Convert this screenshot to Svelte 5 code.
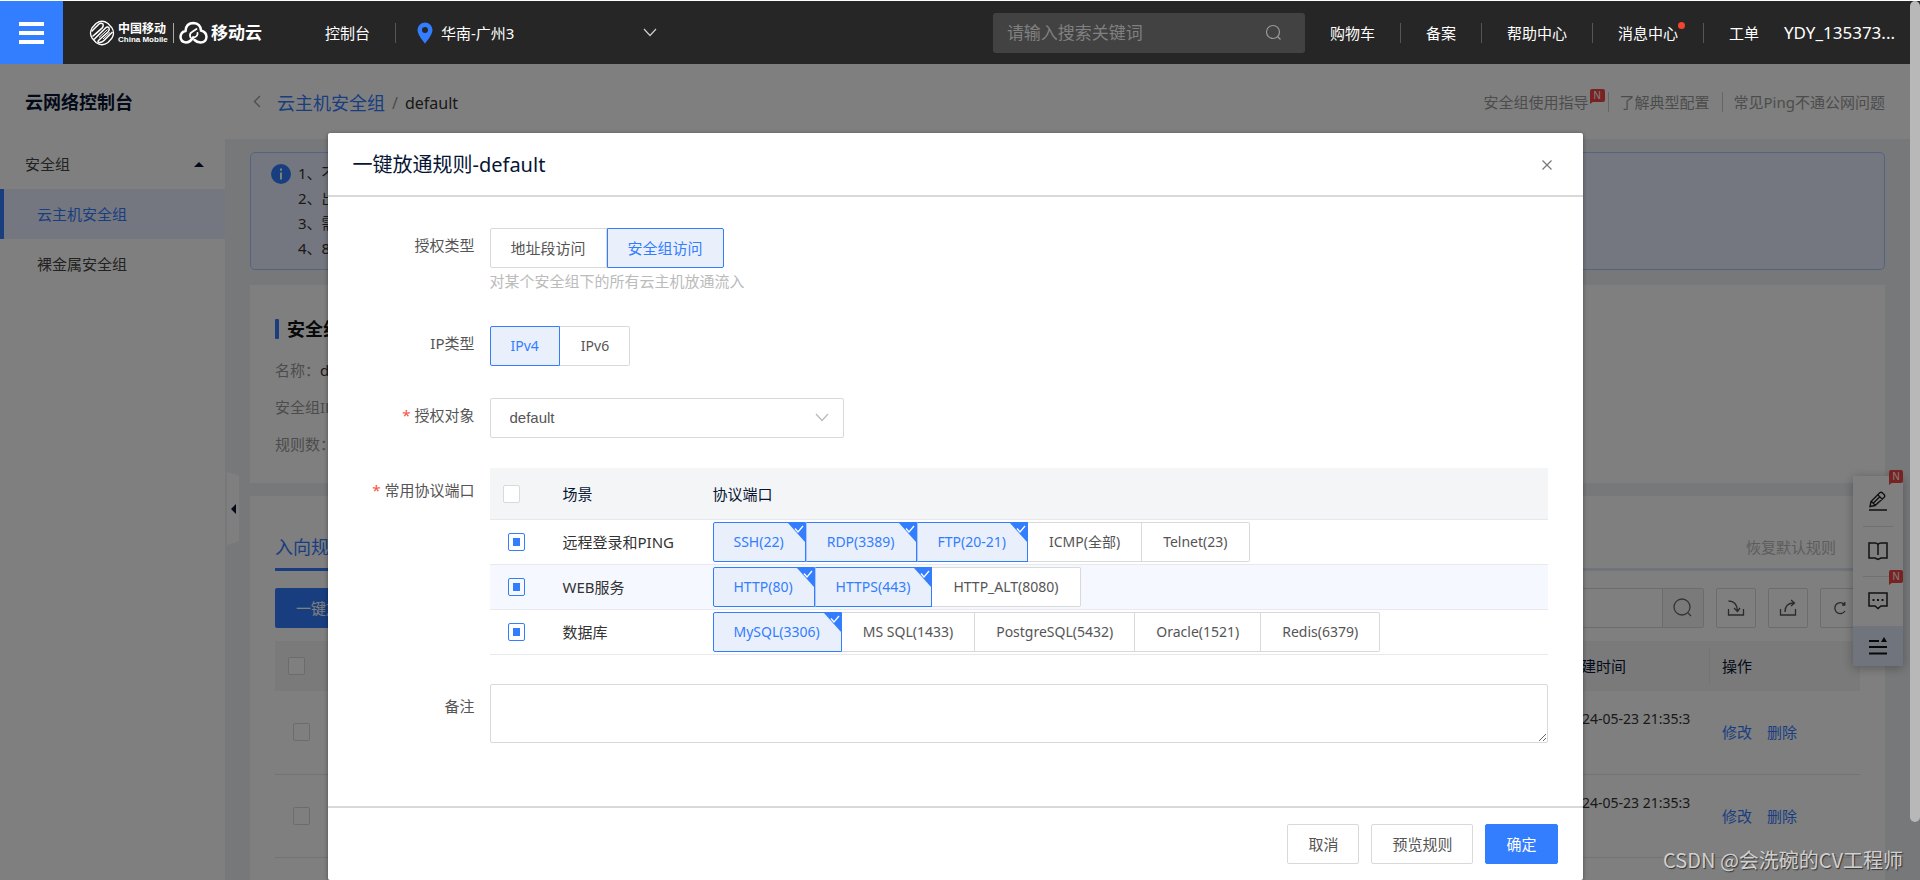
<script lang="ts">
    type Port = { name: string; checked: boolean };
    type Scene = { name: string; ports: Port[] };

    const navItems = ["购物车", "备案", "帮助中心", "消息中心", "工单"];
    const notices = ["1、不", "2、出", "3、需", "4、8"];
    const rules = ["2024-05-23 21:35:3", "2024-05-23 21:35:3"];

    let keyword = $state("");
    let authType = $state("group");
    let ipType = $state("IPv4");
    let target = $state("default");
    let remark = $state("");
    let open = $state(true);

    let scenes: Scene[] = $state([
        {
            name: "远程登录和PING",
            ports: [
                { name: "SSH(22)", checked: true },
                { name: "RDP(3389)", checked: true },
                { name: "FTP(20-21)", checked: true },
                { name: "ICMP(全部)", checked: false },
                { name: "Telnet(23)", checked: false },
            ],
        },
        {
            name: "WEB服务",
            ports: [
                { name: "HTTP(80)", checked: true },
                { name: "HTTPS(443)", checked: true },
                { name: "HTTP_ALT(8080)", checked: false },
            ],
        },
        {
            name: "数据库",
            ports: [
                { name: "MySQL(3306)", checked: true },
                { name: "MS SQL(1433)", checked: false },
                { name: "PostgreSQL(5432)", checked: false },
                { name: "Oracle(1521)", checked: false },
                { name: "Redis(6379)", checked: false },
            ],
        },
    ]);

    function allChecked(scene: Scene) {
        return scene.ports.every((p) => p.checked);
    }

    function partial(scene: Scene) {
        return !allChecked(scene) && scene.ports.some((p) => p.checked);
    }

    function toggle(scene: Scene) {
        const value = !allChecked(scene);
        scene.ports.forEach((p) => (p.checked = value));
    }

    function toggleAll() {
        const value = !scenes.every(allChecked);
        scenes.forEach((s) => s.ports.forEach((p) => (p.checked = value)));
    }
</script>

{#snippet badge()}
    <span class="badge">N</span>
{/snippet}

<div class="app">
    <header class="topbar">
        <button class="menu" aria-label="菜单"><i></i><i></i><i></i></button>
        <a class="logo" href="#home">
            <svg width="26" height="26" viewBox="0 0 26 26" fill="none" stroke="#fff">
                <path d="M7 3.500Q13-1 19 3.500L23 8Q26 13 23 18L19 22.500Q13 27 7 22.500L3 18Q0 13 3 8Z" stroke-width="1.300" />
                <path d="M2.500 11.500L10 4Q12 2.500 14 4Q15 6 13 8L3.500 16.500M5 19.500L16.500 8Q18.500 6 20 8Q21 10 19 12L9.500 20.500Q8 22.500 10.500 22.500Q13 22.500 15 20.500L23.500 12" stroke-width="1.500" />
                <path d="M6.500 14.500L14.500 7M10 17.500L18.500 9.500M14 19L21 12.500" stroke-width="1" />
            </svg>
            <span class="mobile"><b>中国移动</b><small>China Mobile</small></span>
            <span class="split"></span>
            <svg width="29" height="24" viewBox="0 0 29 24" fill="none" stroke="#fff" stroke-width="2.500" stroke-linecap="round">
                <path d="M14 16.500Q11 21.500 7 21.500Q1.500 21 1.500 15.500Q2 11 6.500 10Q7 2 14.500 2Q21.500 2.500 22 9.500Q27.500 11 27.500 16Q27 21.500 21.500 21.500Q18 21.500 15.500 19" />
                <path d="M11.500 16.500Q10 12.500 13 11L17.500 8M14.500 16.500Q19 15.500 18.500 12" stroke-width="1.800" />
            </svg>
            <strong>移动云</strong>
        </a>
        <a class="console" href="#console">控制台</a>
        <span class="vline"></span>
        <button class="region">
            <svg width="16" height="22" viewBox="0 0 16 22">
                <path fill="#337dff" fill-rule="evenodd" d="M8 .500A7.500 7.500 0 0 0 .500 8C.500 13 8 21.500 8 21.500S15.500 13 15.500 8A7.500 7.500 0 0 0 8 .500ZM8 5a3 3 0 1 1 0 6a3 3 0 0 1 0-6Z" />
            </svg>
            <span>华南-广州3</span>
            <svg width="14" height="9" viewBox="0 0 14 9" fill="none" stroke="#ccc" stroke-width="1.200"><path d="M1 1l6 6.500L13 1" /></svg>
        </button>
        <div class="search">
            <input bind:value={keyword} placeholder="请输入搜索关键词" aria-label="搜索" />
            <svg width="17" height="17" viewBox="0 0 17 17" fill="none" stroke="#999" stroke-width="1.200"><circle cx="8" cy="8" r="6.500" /><path d="M12.500 12.500l3 3" /></svg>
        </div>
        <nav>
            {#each navItems as item}
                <a href="#nav">{item}{#if item === "消息中心"}<i class="dot"></i>{/if}</a>
            {/each}
        </nav>
        <a class="user" href="#user">YDY_135373...</a>
    </header>

    <div class="pagehead">
        <h1>云网络控制台</h1>
        <svg width="8" height="13" viewBox="0 0 8 13" fill="none" stroke="#999" stroke-width="1.300"><path d="M7 1L1.500 6.500L7 12" /></svg>
        <div class="crumbs">
            <a href="#groups">云主机安全组</a>
            <span class="slash">/</span>
            <span class="current">default</span>
        </div>
        <div class="links">
            <a href="#guide">安全组使用指导{@render badge()}</a>
            <a href="#config">了解典型配置</a>
            <a href="#ping">常见Ping不通公网问题</a>
        </div>
    </div>

    <div class="layout">
        <aside>
            <button class="side group">安全组<svg width="10" height="5" viewBox="0 0 10 5"><path d="M0 5L5 0l5 5z" fill="#061533" /></svg></button>
            <a class="side active" href="#host">云主机安全组</a>
            <a class="side" href="#bare">裸金属安全组</a>
            <button class="fold" aria-label="收起">
                <svg width="5" height="10" viewBox="0 0 5 10"><path d="M5 0v10L0 5z" fill="#061533" /></svg>
            </button>
        </aside>

        <main>
            <section class="notice">
                <svg width="20" height="20" viewBox="0 0 20 20"><circle cx="10" cy="10" r="10" fill="#337dff" /><path d="M10 4.500v2.200M10 8.500v7" stroke="#fff" stroke-width="2" /></svg>
                <div>
                    {#each notices as line}<p>{line}</p>{/each}
                </div>
            </section>

            <section class="card info">
                <h2>安全组</h2>
                <p><span>名称：</span>default</p>
                <p><span>安全组ID</span></p>
                <p><span>规则数：</span></p>
            </section>

            <section class="card list">
                <div class="tabs">
                    <button class="tab">入向规则</button>
                    <button class="restore">恢复默认规则</button>
                </div>
                <div class="toolbar">
                    <button class="primary">一键放通</button>
                    <div class="filter">
                        <input aria-label="规则搜索" />
                        <button aria-label="查询">
                            <svg width="20" height="20" viewBox="0 0 20 20" fill="none" stroke="#666" stroke-width="1.300"><circle cx="9" cy="9" r="8" /><path d="M15 15l3 3" /></svg>
                        </button>
                    </div>
                    <button class="tool" aria-label="导入">
                        <svg width="18" height="18" viewBox="0 0 18 18" fill="none" stroke="#555" stroke-width="1.300"><path d="M1.500 10v6h15v-6M1.500 2Q10 2 10.500 12M7 9l3.500 3.500L13 9" /></svg>
                    </button>
                    <button class="tool" aria-label="导出">
                        <svg width="18" height="18" viewBox="0 0 18 18" fill="none" stroke="#555" stroke-width="1.300"><path d="M1.500 10v6h15v-6M6 13Q6 4 15 4M12 1l3.500 3L12 7" /></svg>
                    </button>
                    <button class="tool" aria-label="刷新">
                        <svg width="14" height="14" viewBox="0 0 14 14" fill="none" stroke="#555" stroke-width="1.300"><path d="M11.500 3.500A5.500 5.500 0 1 0 12 10M11.800 1v3H9" /></svg>
                    </button>
                </div>
                <table class="rules">
                    <thead>
                        <tr>
                            <th class="pick"><input type="checkbox" aria-label="全选规则" /></th>
                            <th></th>
                            <th class="time">创建时间</th>
                            <th class="ops">操作</th>
                        </tr>
                    </thead>
                    <tbody>
                        {#each rules as time}
                            <tr>
                                <td class="pick"><input type="checkbox" aria-label="选择规则" /></td>
                                <td></td>
                                <td class="time">{time}</td>
                                <td class="ops"><a href="#edit">修改</a><a href="#del">删除</a></td>
                            </tr>
                        {/each}
                    </tbody>
                </table>
            </section>
        </main>
    </div>

    <div class="float">
        <button aria-label="评价">
            {@render badge()}
            <svg width="20" height="20" viewBox="0 0 20 20" fill="none" stroke="#222" stroke-width="1.400"><path d="M1 19h18M2 15.500l1-5L11.500 2q1.500-1.500 3 0l1.500 1.500q1.500 1.500 0 3L7 14.500zM10 4l4.500 4.500M3.500 10.500l4 4M5.500 12l6-6" /></svg>
        </button>
        <button aria-label="文档">
            <svg width="20" height="20" viewBox="0 0 20 20" fill="none" stroke="#222" stroke-width="1.500"><path d="M10 3.500Q9 2 7 2H1v15h6l3 1.500l3-1.500h6V2h-6Q11 2 10 3.500V14" /></svg>
        </button>
        <button aria-label="咨询">
            {@render badge()}
            <svg width="20" height="20" viewBox="0 0 20 20" fill="none" stroke="#222" stroke-width="1.500"><path d="M1 2h18v13h-6l-3 2.500L7 15H1z" /><path d="M4.500 9h2M9 9h2M13.500 9h2" stroke-width="2" /></svg>
        </button>
        <button class="last" aria-label="收起工具栏">
            <svg width="18" height="18" viewBox="0 0 18 18" fill="none" stroke="#111" stroke-width="1.800"><path d="M0 4h10M0 10h18M0 16.500h18" /><path d="M15 0l3 5h-6z" fill="#111" stroke="none" /></svg>
        </button>
    </div>

    {#if open}
        <div class="mask">
            <div class="modal" role="dialog" aria-labelledby="modal-title">
                <div class="modal-head">
                    <h3 id="modal-title">一键放通规则-default</h3>
                    <button class="close" aria-label="关闭" onclick={() => (open = false)}>
                        <svg width="10" height="10" viewBox="0 0 10 10" stroke="#777" stroke-width="1.200"><path d="M.500.500l9 9M9.500.500l-9 9" /></svg>
                    </button>
                </div>

                <form class="modal-body">
                    <div class="field">
                        <span class="label" id="auth-label">授权类型</span>
                        <div>
                            <div class="choices" role="radiogroup" aria-labelledby="auth-label">
                                <label class="choice"><input type="radio" value="cidr" bind:group={authType} />地址段访问</label>
                                <label class="choice"><input type="radio" value="group" bind:group={authType} />安全组访问</label>
                            </div>
                            <p class="hint">对某个安全组下的所有云主机放通流入</p>
                        </div>
                    </div>
                    <div class="field">
                        <span class="label" id="ip-label">IP类型</span>
                        <div class="choices latin" role="radiogroup" aria-labelledby="ip-label">
                            {#each ["IPv4", "IPv6"] as ip}
                                <label class="choice"><input type="radio" value={ip} bind:group={ipType} />{ip}</label>
                            {/each}
                        </div>
                    </div>
                    <div class="field target">
                        <label class="label required" for="target">授权对象</label>
                        <div class="select">
                            <select id="target" bind:value={target}><option>default</option></select>
                            <svg width="14" height="9" viewBox="0 0 14 9" fill="none" stroke="#bbb" stroke-width="1.300"><path d="M1 1l6 6.500L13 1" /></svg>
                        </div>
                    </div>
                    <div class="field ports">
                        <span class="label required">常用协议端口</span>
                        <table>
                            <thead>
                                <tr>
                                    <th class="pick"><input type="checkbox" aria-label="全选" onclick={toggleAll} /></th>
                                    <th class="scene">场景</th>
                                    <th>协议端口</th>
                                </tr>
                            </thead>
                            <tbody>
                                {#each scenes as scene}
                                    <tr>
                                        <td class="pick">
                                            <input type="checkbox" aria-label={scene.name} class:partial={partial(scene)} checked={allChecked(scene)} onclick={() => toggle(scene)} />
                                        </td>
                                        <td class="scene">{scene.name}</td>
                                        <td>
                                            <div class="choices latin">
                                                {#each scene.ports as port}
                                                    <label class="choice">
                                                        <input type="checkbox" bind:checked={port.checked} />{port.name}
                                                        {#if port.checked}
                                                            <svg class="corner" width="17" height="19" viewBox="0 0 17 19"><path d="M0 0h17v19z" fill="#337dff" /><path d="M7 5.500l3 3.500l5-6" fill="none" stroke="#fff" stroke-width="1.300" /></svg>
                                                        {/if}
                                                    </label>
                                                {/each}
                                            </div>
                                        </td>
                                    </tr>
                                {/each}
                            </tbody>
                        </table>
                    </div>
                    <div class="field remark">
                        <label class="label" for="remark">备注</label>
                        <textarea id="remark" bind:value={remark}></textarea>
                    </div>
                </form>

                <div class="modal-foot">
                    <button onclick={() => (open = false)}>取消</button>
                    <button>预览规则</button>
                    <button class="ok">确定</button>
                </div>
            </div>
        </div>
    {/if}

    <div class="scrollbar"></div>
    <span class="watermark">CSDN @会洗碗的CV工程师</span>
</div>

<style>
    :global(body) {
        background: #fff;
    }
    .app {
        position: relative;
        height: 100vh;
        box-sizing: border-box;
        padding-top: 1px;
        overflow: hidden;
        font: 15px/24px "Noto Sans", "Noto Sans CJK SC", sans-serif;
        color: #444;
    }
    .app :global(*) {
        box-sizing: border-box;
    }
    h1, h2, h3, p {
        margin: 0;
        font-weight: 400;
    }
    a {
        color: inherit;
        text-decoration: none;
    }
    button, input, textarea, select {
        font: inherit;
        color: inherit;
    }
    button {
        border: 0;
        padding: 0;
        background: none;
        white-space: nowrap;
    }
    svg {
        flex: none;
        display: block;
    }

    .topbar {
        display: flex;
        align-items: center;
        height: 63px;
        padding-right: 25px;
        background: #262626;
        color: #fff;
    }
    .menu {
        display: flex;
        flex-direction: column;
        align-items: center;
        justify-content: center;
        gap: 5px;
        width: 63px;
        height: 63px;
        background: #337dff;
    }
    .menu i {
        width: 25px;
        height: 4px;
        background: #fff;
    }
    .logo {
        display: flex;
        align-items: center;
        margin-left: 26px;
        width: 236px;
    }
    .mobile {
        display: flex;
        flex-direction: column;
        margin-left: 3px;
        width: 49px;
        white-space: nowrap;
    }
    .mobile b {
        font-size: 12px;
        line-height: 13px;
    }
    .mobile small {
        font: bold 8px/9px "Liberation Sans", sans-serif;
    }
    .split {
        width: 1px;
        height: 20px;
        margin: 0 5px 0 6px;
        background: #aaa;
    }
    .logo strong {
        margin-left: 3px;
        font-size: 17px;
    }
    .vline {
        width: 1px;
        height: 20px;
        margin: 0 21px 0 25px;
        background: #555;
    }
    .region {
        display: flex;
        align-items: center;
        width: 240px;
    }
    .region span {
        margin: 0 auto 0 8px;
    }
    .search {
        display: flex;
        align-items: center;
        width: 312px;
        height: 40px;
        margin-left: auto;
        padding: 0 23px 0 14px;
        border-radius: 3px;
        background: #424242;
    }
    .search input {
        flex: 1;
        min-width: 0;
        padding: 0;
        border: 0;
        outline: 0;
        background: none;
        font-size: 17px;
    }
    .search input::placeholder {
        color: #808080;
    }
    nav {
        display: flex;
        align-items: center;
        white-space: nowrap;
    }
    nav a {
        position: relative;
        padding: 0 25px;
        line-height: 20px;
    }
    nav a + a {
        border-left: 1px solid #555;
    }
    .dot {
        position: absolute;
        top: -1px;
        right: 18px;
        width: 7px;
        height: 7px;
        border-radius: 50%;
        background: #f5432f;
    }
    .user {
        font-size: 17px;
    }

    .pagehead {
        display: flex;
        align-items: center;
        height: 75px;
        padding-right: 35px;
        background: #fff;
    }
    .pagehead h1 {
        width: 228px;
        margin-left: 25px;
        font-size: 18px;
        font-weight: 700;
        color: #061533;
    }
    .crumbs {
        display: flex;
        align-items: center;
        margin-left: 16px;
        padding-top: 2px;
        font-size: 16px;
        color: #333;
    }
    .crumbs a {
        font-size: 18px;
        color: #337dff;
    }
    .slash {
        margin: 0 7px;
        color: #999;
    }
    .links {
        display: flex;
        margin-left: auto;
        color: #999;
    }
    .links a {
        position: relative;
        padding: 0 12px;
    }
    .links a:first-child {
        padding-right: 19px;
    }
    .links a:last-child {
        padding-right: 0;
    }
    .links a + a::before {
        content: "";
        position: absolute;
        left: 0;
        top: 2px;
        height: 20px;
        border-left: 1px solid #ccc;
    }
    .badge {
        position: absolute;
        top: -1px;
        right: 3px;
        width: 15px;
        height: 13px;
        border-radius: 2px 2px 2px 0;
        background: #f04444;
        color: #fff;
        font: 10px/13px "Liberation Sans", sans-serif;
        text-align: center;
    }
    .badge::after {
        content: "";
        position: absolute;
        left: 0;
        top: 12px;
        border-top: 3px solid #f04444;
        border-right: 4px solid transparent;
    }

    .layout {
        display: flex;
    }
    aside {
        position: relative;
        flex: none;
        width: 225px;
        background: #fff;
    }
    .side {
        display: flex;
        align-items: center;
        width: 100%;
        height: 50px;
        padding-left: 37px;
        color: #444;
    }
    .group {
        justify-content: space-between;
        padding: 0 21px 0 25px;
    }
    .side.active {
        padding-left: 33px;
        border-left: 4px solid #337dff;
        background: #e8effe;
        color: #337dff;
    }
    .fold {
        position: absolute;
        left: 227px;
        top: 333px;
        display: flex;
        align-items: center;
        justify-content: center;
        width: 12px;
        height: 73px;
        background: #fff;
        clip-path: polygon(0 0, 100% 5%, 100% 95%, 0 100%);
    }
    main {
        flex: 1;
        min-width: 0;
        padding: 13px 35px 0 25px;
        background: #eef1f5;
    }
    .notice {
        display: flex;
        gap: 7px;
        padding: 8px 20px;
        border: 1px solid #a9c6ff;
        border-radius: 5px;
        background: #e8effe;
        line-height: 25px;
        color: #333;
    }
    .notice svg {
        margin-top: 3px;
    }
    .card {
        padding: 0 25px;
        background: #fff;
    }
    .info {
        margin-top: 15px;
        padding-top: 32px;
        padding-bottom: 20px;
    }
    .info h2 {
        display: flex;
        align-items: center;
        gap: 8px;
        margin-bottom: 11px;
        font-size: 18px;
        font-weight: 700;
        color: #111;
    }
    .info h2::before {
        content: "";
        width: 4px;
        height: 20px;
        border-radius: 1px;
        background: #337dff;
    }
    .info p {
        line-height: 37px;
        color: #333;
    }
    .info span {
        color: #999;
    }
    .list {
        margin-top: 13px;
        padding-top: 26px;
        padding-bottom: 40px;
    }
    .tabs {
        display: flex;
        justify-content: space-between;
        border-bottom: 3px solid #e0e6f2;
    }
    .tab {
        height: 49px;
        margin-bottom: -3px;
        padding-top: 4px;
        border-bottom: 3px solid #337dff;
        font-size: 18px;
        color: #337dff;
    }
    .restore {
        margin-right: 24px;
        padding-top: 4px;
        color: #bbb;
    }
    .toolbar {
        display: flex;
        gap: 12px;
        margin: 17px 0 13px;
    }
    .primary {
        height: 40px;
        margin-right: auto;
        padding: 0 21px;
        border-radius: 2px;
        background: #337dff;
        color: #fff;
    }
    .filter {
        display: flex;
        width: 400px;
        height: 40px;
        border: 1px solid #d9d9d9;
        border-radius: 2px;
    }
    .filter input {
        flex: 1;
        min-width: 0;
        border: 0;
        background: none;
    }
    .filter button {
        display: grid;
        place-items: center;
        width: 41px;
        border-left: 1px solid #d9d9d9;
        background: #f5f5f5;
    }
    .tool {
        display: grid;
        place-items: center;
        width: 40px;
        height: 40px;
        border: 1px solid #d9d9d9;
        border-radius: 2px;
    }
    table {
        width: 100%;
        border-collapse: collapse;
        table-layout: fixed;
    }
    th, td {
        padding: 0;
        text-align: left;
        font-weight: 400;
    }
    th {
        height: 50px;
        color: #061533;
    }
    td a {
        margin-right: 15px;
        color: #337dff;
    }
    table input[type="checkbox"] {
        appearance: none;
        display: block;
        width: 17px;
        height: 18px;
        margin: 0;
        border: 1px solid #d9d9d9;
        border-radius: 2px;
        background: #fff;
    }
    .pick input.partial, .pick input:checked {
        border-color: #337dff;
        background: #337dff;
        background-clip: content-box;
        padding: 4px;
    }
    .rules thead {
        background: #f4f4f4;
    }
    .rules td {
        height: 83px;
        border-bottom: 1px solid #e6e6e6;
    }
    .rules .pick {
        width: 62px;
        padding-left: 18px;
    }
    .rules th.pick {
        padding-left: 13px;
    }
    .rules .time {
        width: 155px;
        padding-left: 12px;
    }
    .rules td.time {
        padding-top: 16px;
        vertical-align: top;
        font-size: 14px;
        color: #333;
        white-space: nowrap;
    }
    .rules .ops {
        width: 151px;
        padding-left: 13px;
    }
    .rules th.ops {
        background: linear-gradient(#e6e6e6, #e6e6e6) 0 50% / 1px 36px no-repeat;
    }

    .float {
        position: absolute;
        right: 17px;
        top: 476px;
        width: 50px;
        background: #fff;
        box-shadow: 0 2px 10px rgba(0, 0, 0, 0.3);
    }
    .float button {
        position: relative;
        display: grid;
        place-items: center;
        width: 50px;
        height: 50px;
    }
    .float button + button:not(.last)::before {
        content: "";
        position: absolute;
        top: 0;
        left: 10px;
        width: 30px;
        border-top: 1px solid #e0e0e0;
    }
    .float .last {
        height: 40px;
        background: #e0e8fb;
    }
    .float .badge {
        top: -6px;
        right: 0;
        width: 14px;
    }

    .mask {
        position: absolute;
        inset: 64px 0 0;
        padding: 69px 10px 0 0;
        background: rgba(0, 0, 0, 0.5);
    }
    .modal {
        width: 90%;
        max-width: 1255px;
        margin: 0 auto;
        border-radius: 2px;
        background: #fff;
        box-shadow: 0 1px 4px rgba(0, 0, 0, 0.4);
    }
    .modal-head {
        display: flex;
        align-items: center;
        justify-content: space-between;
        height: 64px;
        padding: 2px 31px 0 25px;
        border-bottom: 2px solid #d9d9d9;
    }
    .modal-head h3 {
        font-size: 20px;
        color: #061533;
    }
    .modal-body {
        padding: 31px 35px 63px 0;
    }
    .field {
        display: grid;
        grid-template-columns: 147px minmax(0, 1fr);
        column-gap: 15px;
        align-items: start;
        margin-bottom: 32px;
    }
    .field.target {
        margin-bottom: 30px;
    }
    .field.ports {
        margin-bottom: 29px;
    }
    .field.remark {
        margin-bottom: 0;
    }
    .label {
        line-height: 34px;
        text-align: right;
        color: #555;
    }
    .ports .label, .remark .label {
        line-height: 44px;
    }
    .required::before {
        content: "* ";
        color: #f5533d;
    }
    .hint {
        line-height: 26px;
        color: #bbb;
    }
    .choices {
        display: flex;
    }
    .choice {
        position: relative;
        height: 40px;
        padding: 0 20px;
        border: 1px solid #d9d9d9;
        background: #fff;
        line-height: 38px;
        white-space: nowrap;
        color: #555;
    }
    .choice:first-child {
        border-radius: 2px 0 0 2px;
    }
    .choice:last-child {
        border-radius: 0 2px 2px 0;
    }
    .choice:has(:checked) {
        border-color: #337dff;
        background: #e9f0fc;
        color: #337dff;
    }
    .choice:has(:checked) + .choice:has(:checked) {
        border-left-color: #a9c6ff;
    }
    .choice + .choice:not(:has(:checked)) {
        padding-left: 21px;
        border-left: 0;
    }
    .choices .choice input {
        position: absolute;
        width: 1px;
        height: 1px;
        margin: 0;
        opacity: 0;
    }
    .latin {
        font-size: 14px;
    }
    .ports .choice {
        padding-right: 21px;
    }
    .corner {
        position: absolute;
        top: 0;
        right: 0;
    }
    .select {
        position: relative;
        max-width: 354px;
    }
    .select select {
        appearance: none;
        width: 100%;
        height: 40px;
        padding: 0 19px;
        border: 1px solid #d9d9d9;
        border-radius: 2px;
        background: #fff;
        font-family: "Liberation Sans", sans-serif;
        color: #555;
    }
    .select svg {
        position: absolute;
        right: 15px;
        top: 15px;
        pointer-events: none;
    }
    .ports thead {
        background: #f4f5f7;
    }
    .ports th {
        height: 51px;
        padding-top: 2px;
        border-bottom: 1px solid #e8e9ec;
    }
    .ports td {
        height: 45px;
        border-bottom: 1px solid #e8e9ec;
        color: #333;
    }
    .ports tbody tr:nth-child(2) {
        background: #f5f8ff;
    }
    .ports .pick {
        width: 73px;
        padding-left: 18px;
    }
    .ports th.pick {
        padding-left: 13px;
    }
    .ports .scene {
        width: 150px;
    }
    textarea {
        display: block;
        width: 100%;
        height: 59px;
        border: 1px solid #d9d9d9;
        border-radius: 2px;
        resize: vertical;
    }
    .modal-foot {
        display: flex;
        justify-content: flex-end;
        gap: 12px;
        padding: 16px 25px;
        border-top: 2px solid #d9d9d9;
    }
    .modal-foot button {
        height: 40px;
        padding: 0 20px;
        border: 1px solid #d9d9d9;
        border-radius: 2px;
        color: #555;
    }
    .modal-foot .ok {
        border-color: #337dff;
        background: #337dff;
        color: #fff;
    }

    .scrollbar {
        position: absolute;
        top: 1px;
        right: 0;
        width: 10px;
        height: 821px;
        border-radius: 5px;
        background: #b8b8b8;
    }
    .watermark {
        position: absolute;
        right: 17px;
        bottom: 8px;
        font: 20px/24px "Noto Sans CJK SC", sans-serif;
        color: #d0d0d0;
        text-shadow: 1px 1px 1px #333;
    }
</style>
